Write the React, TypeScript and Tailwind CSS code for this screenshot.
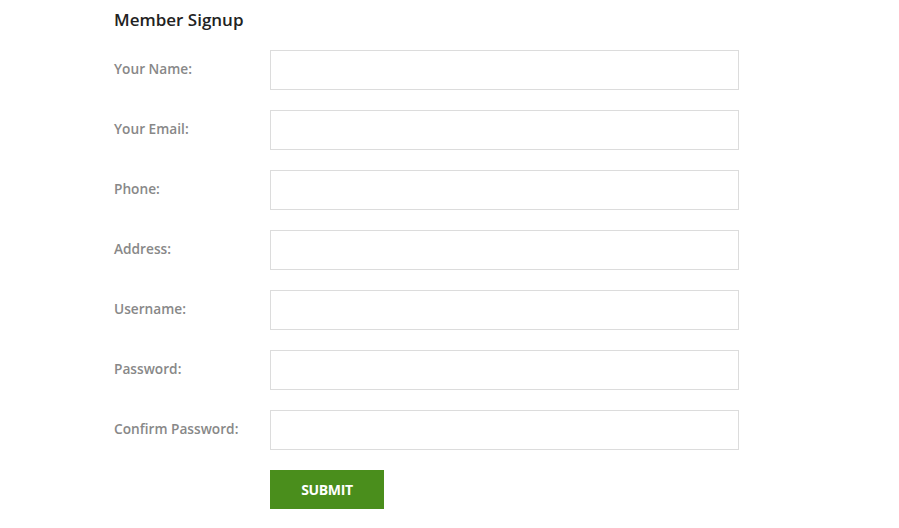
const FIELDS = [
  { label: 'Your Name:', type: 'text' },
  { label: 'Your Email:', type: 'email' },
  { label: 'Phone:', type: 'tel' },
  { label: 'Address:', type: 'text' },
  { label: 'Username:', type: 'text' },
  { label: 'Password:', type: 'password' },
  { label: 'Confirm Password:', type: 'password' },
]

export default function App() {
  return (
    <div className="min-h-screen bg-white pl-[114px] pt-[8px] font-['Open_Sans',sans-serif]">
      <h2 className="text-[17px] leading-[24px] font-semibold text-[#222]">Member Signup</h2>
      <form className="mt-[18px] flex flex-col gap-[20px]" onSubmit={e => e.preventDefault()}>
        {FIELDS.map(f => (
          <div key={f.label} className="flex items-center">
            <label className="w-[156px] -mt-[1px] text-[13.7px] font-semibold text-[#888]">{f.label}</label>
            <input
              type={f.type}
              className="w-[469px] h-[40px] border border-[#dcdcdc] bg-white px-3 text-sm outline-none"
            />
          </div>
        ))}
        <div className="flex">
          <div className="w-[156px]" />
          <button
            type="submit"
            className="w-[114px] h-[39px] bg-[#4a8e1c] text-white text-[14px] font-bold tracking-tight"
          >
            SUBMIT
          </button>
        </div>
      </form>
    </div>
  )
}
